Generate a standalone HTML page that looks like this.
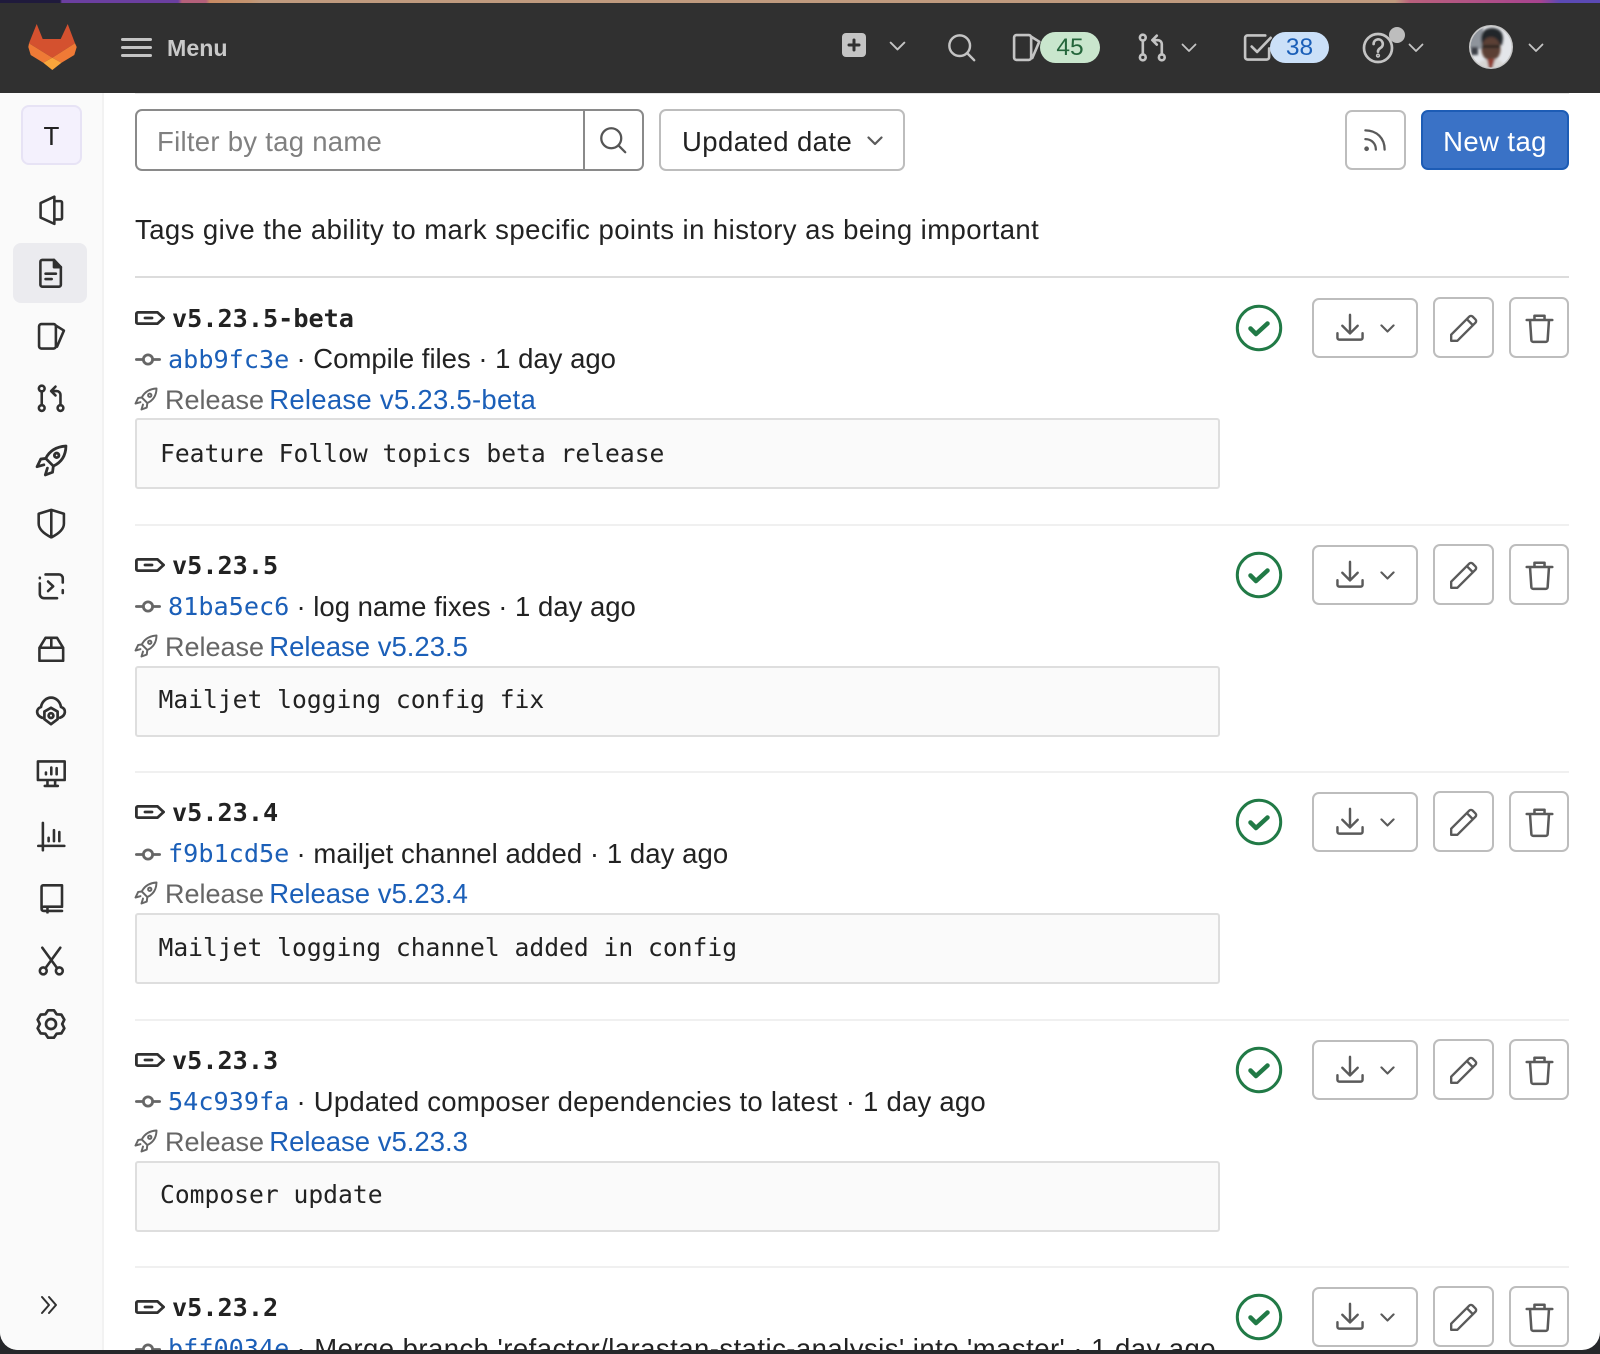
<!DOCTYPE html>
<html lang="en"><head><meta charset="utf-8"><title>Tags</title>
<style>
html,body{margin:0;padding:0;width:1600px;height:1354px;background:#26272a;overflow:hidden}
#win{position:absolute;left:0;top:0;width:1600px;height:1350px;background:#fff;overflow:hidden;border-radius:0 0 18px 18px;font-family:"Liberation Sans",sans-serif;color:#222}
.a{position:absolute}
svg.i{position:absolute;fill:none;stroke:#303030;stroke-width:1.35;stroke-linecap:round;stroke-linejoin:round;overflow:visible}
svg.h{stroke:#c4c4c4;stroke-width:1.35}
svg.g{stroke:#5a5a5a;stroke-width:1.3}
.t{position:absolute;white-space:nowrap;line-height:40px;font-size:27.5px;height:40px}
.m{font-family:"DejaVu Sans Mono","Liberation Mono",monospace;font-size:25.2px}
.b{font-weight:700}
.l{color:#1b5fb8;margin-left:-2.5px}
.gr{color:#666;font-size:27px}
.c{color:#1b5fb8}
.btn{position:absolute;background:#fff;border:2px solid #bdbdbd;border-radius:7px;box-sizing:border-box}
.row{position:absolute;left:0;width:1600px;height:247px}
.hr{position:absolute;left:135px;width:1434px;top:0;height:2px;background:#f0f0f0}
.box{position:absolute;left:135px;top:142px;width:1085px;height:71px;box-sizing:border-box;background:#fafafa;border:2px solid #dedede;border-radius:3px}
.badge{position:absolute;height:31px;line-height:31px;border-radius:16px;text-align:center;font-size:24.5px}
.bt{font-size:24.65px;top:156.500px}
</style></head><body>
<svg width="0" height="0" style="position:absolute">
<defs>
<symbol id="project" viewBox="0 0 16 16"><path d="M2.400 4.200L9.600.9v14.200l-7.200-3.300zM9.600 3.200h3.200a.8.8 0 0 1 .8.8v8a.8.8 0 0 1-.8.8H9.600"/></symbol>
<symbol id="doc" viewBox="0 0 16 16"><path d="M3.300 1H9.400L13 4.800V14a1 1 0 0 1-1 1H3.300a1 1 0 0 1-1-1V2a1 1 0 0 1 1-1z"/><path d="M9.400 1V4.800H13" fill="#303030"/><path d="M5 8.200H10.400M5 11H8.200"/></symbol>
<symbol id="issues" viewBox="0 0 16 16"><path d="M2.800 1.600h6.400a1.200 1.200 0 0 1 1.200 1.200v10.400a1.200 1.200 0 0 1-1.200 1.200H2.800a1.200 1.200 0 0 1-1.200-1.200V2.800a1.200 1.200 0 0 1 1.200-1.200zM10.400 2.400l4.200 2.600L11 13.400"/></symbol>
<symbol id="mr" viewBox="0 0 16 16"><circle cx="3" cy="2.900" r="1.500"/><circle cx="3" cy="13.100" r="1.500"/><circle cx="12.800" cy="13.100" r="1.500"/><path d="M3 4.400v7.200M12.800 11.600V6.200a2 2 0 0 0-2-2H8.400M10.200 1.900L7.900 4.200l2.300 2.300"/></symbol>
<symbol id="rocket" viewBox="0 0 16 16"><path d="M15 1C10.300 1.300 7.100 3.200 5.200 7l3.700 3.700C12.600 9 14.900 5.800 15 1z"/><circle cx="10.500" cy="5.500" r="1.100"/><path d="M5.200 7L2.800 7.300 1 11l3.300-.9M8.900 10.700l-.4 3L5 15l1-3.300"/></symbol>
<symbol id="shield" viewBox="0 0 16 16"><path d="M8 1L14.600 3v5.200C14.600 11 12 13.400 8 15.400 4 13.400 1.400 11 1.400 8.200V3zM8 1V15.400"/></symbol>
<symbol id="ci" viewBox="0 0 16 16"><path d="M5 1.800h7a2 2 0 0 1 2 2V6M2 6.500V12a2.200 2.200 0 0 0 2.200 2.200H11M2 3.800V3.500M14 10v1.500M6.300 5.500L9 8 6.300 10.500"/></symbol>
<symbol id="package" viewBox="0 0 16 16"><path d="M1.800 7.200L5 2h6l3.200 5.200V14H1.800zM1.800 7.200H14.200M8 2V7.200"/></symbol>
<symbol id="cloud" viewBox="0 0 16 16"><path d="M3.600 11.400C.4 10.200 .3 7 3 6 3.400 3.200 5.800 1.300 8 1.300c2.400 0 4.500 1.800 5 4.700 2.800 1 2.500 4.200-.5 5.400"/><path d="M8 6.400l3.300 1.900v3.800L8 14.600 4.700 12.100V8.300z"/><circle cx="8" cy="10.300" r="1.200"/></symbol>
<symbol id="monitor" viewBox="0 0 16 16"><path d="M1 1.800H15V11.500H1zM4.600 14.600H11.400M6 11.500v3M10 11.500v3M5.200 8.500V7.600M8 8.500V5M10.800 8.500V5.300"/></symbol>
<symbol id="chart" viewBox="0 0 16 16"><path d="M3.600 1V15.300M1.200 13H14.800M6.600 10.500V8.800M9.400 10.500V4.800M12.200 10.500V5.800"/></symbol>
<symbol id="book" viewBox="0 0 16 16"><path d="M2.900 13V2a.8.8 0 0 1 .8-.8H13.600V12.400H4.100a1.200 1.200 0 0 0-1.200 1.100c0 .7.500 1.100 1.200 1.100h9.500M6 12.400V15.400"/></symbol>
<symbol id="scissors" viewBox="0 0 16 16"><circle cx="3.800" cy="13" r="1.800"/><circle cx="12.200" cy="13" r="1.800"/><path d="M3.300 .9L11 11.500M12.700 .9L5 11.500"/></symbol>
<symbol id="gear" viewBox="0 0 16 16"><path d="M6.540 1.150H9.460L10.800 3.150 13.200 3.320 14.660 5.840 13.600 8 14.660 10.160 13.200 12.680 10.800 12.850 9.460 14.850H6.540L5.200 12.850 2.800 12.680 1.340 10.160 2.400 8 1.340 5.840 2.800 3.320 5.200 3.150z"/><circle cx="8" cy="8" r="2.500"/></symbol>
<symbol id="search" viewBox="0 0 16 16"><circle cx="7" cy="7" r="5.700"/><path d="M11.200 11.200L15 15"/></symbol>
<symbol id="chev" viewBox="0 0 16 10"><path d="M1.500 1.500L8 8l6.500-6.500"/></symbol>
<symbol id="todo" viewBox="0 0 16 16"><path d="M14 8.500V13a1.200 1.200 0 0 1-1.200 1.200H2.800A1.200 1.200 0 0 1 1.600 13V3A1.200 1.200 0 0 1 2.800 1.800H12M5 7.500l2.800 2.800L14.800 3"/></symbol>
<symbol id="help" viewBox="0 0 16 16"><circle cx="8" cy="8" r="7"/><path d="M5.800 6a2.300 2.300 0 1 1 3.400 2c-.8.500-1.200 1-1.200 1.800"/><circle cx="8" cy="11.800" r=".4"/></symbol>
<symbol id="rss" viewBox="0 0 16 16"><path d="M2.500 7.500c3.500 0 6 2.500 6 6M2.500 2.500c6.500 0 11 4.500 11 11"/><circle cx="3.200" cy="13" r=".7" fill="#555"/></symbol>
<symbol id="tag" viewBox="0 0 30 14"><path d="M2.800 1.400H22.500L28.600 7l-6.100 5.600H2.800A1.400 1.400 0 0 1 1.400 11.200V2.800A1.400 1.400 0 0 1 2.800 1.400z"/><path d="M10 7H17"/></symbol>
<symbol id="commit" viewBox="0 0 28 14"><circle cx="14" cy="7" r="5"/><path d="M1.500 7H9M19 7H26.500"/></symbol>
<symbol id="download" viewBox="0 0 16 16"><path d="M8 1V10.800M3.900 6.800L8 10.900l4.100-4.100M1.300 10.800v2.400a1 1 0 0 0 1 1H13.700a1 1 0 0 0 1-1v-2.400"/></symbol>
<symbol id="pencil" viewBox="0 0 16 16"><path d="M1.200 14.800V11.400L11.200 1.400a1.300 1.300 0 0 1 1.800 0l1.600 1.600a1.300 1.300 0 0 1 0 1.800L4.600 14.800zM9.800 2.800L13.200 6.200"/></symbol>
<symbol id="trash" viewBox="0 0 16 16"><path d="M1.400 3.600H14.600M5.400 3.600V1.400H10.600V3.600M3.100 3.600L3.800 14a1 1 0 0 0 1 .9h6.400a1 1 0 0 0 1-.9l.7-10.400"/></symbol>
<symbol id="ok" viewBox="0 0 48 48"><circle cx="24" cy="24" r="21.700" fill="none" stroke="#217a46" stroke-width="3"/><path d="M15.500 24.500l5.500 5.500 11.500-10.500" fill="none" stroke="#217a46" stroke-width="4.500" stroke-linecap="round" stroke-linejoin="round"/></symbol>
</defs></svg>

<div id="win">
<!-- sidebar -->
<div class="a" style="left:0;top:93px;width:102px;height:1257px;background:#fafafa;border-right:2px solid #f2f2f2"></div>
<div class="a" style="left:135px;top:93px;width:1434px;height:1px;background:#e4e4e4"></div>
<div class="a" style="left:21px;top:105px;width:61px;height:60px;box-sizing:border-box;background:#f4f1fd;border:2px solid #e7e3f5;border-radius:8px;text-align:center;line-height:58px;font-size:26px;color:#222">T</div>
<div class="a" style="left:13px;top:243px;width:74px;height:60px;background:#ebebef;border-radius:8px"></div>
<svg class="i" style="left:36px;top:195px" width="30.600" height="30.600"><use href="#project"/></svg>
<svg class="i" style="left:36px;top:258px" width="30.600" height="30.600"><use href="#doc"/></svg>
<svg class="i" style="left:36px;top:321px" width="30.600" height="30.600"><use href="#issues"/></svg>
<svg class="i" style="left:36px;top:383px" width="30.600" height="30.600"><use href="#mr"/></svg>
<svg class="i" style="left:35px;top:444px" width="33" height="33"><use href="#rocket"/></svg>
<svg class="i" style="left:36px;top:508px" width="30.600" height="30.600"><use href="#shield"/></svg>
<svg class="i" style="left:36px;top:571px" width="30.600" height="30.600"><use href="#ci"/></svg>
<svg class="i" style="left:36px;top:634px" width="30.600" height="30.600"><use href="#package"/></svg>
<svg class="i" style="left:35px;top:695px" width="32" height="32"><use href="#cloud"/></svg>
<svg class="i" style="left:36px;top:758px" width="30.600" height="30.600"><use href="#monitor"/></svg>
<svg class="i" style="left:36px;top:821px" width="30.600" height="30.600"><use href="#chart"/></svg>
<svg class="i" style="left:36px;top:883px" width="30.600" height="30.600"><use href="#book"/></svg>
<svg class="i" style="left:36px;top:946px" width="30.600" height="30.600"><use href="#scissors"/></svg>
<svg class="i" style="left:35px;top:1008px" width="32" height="32"><use href="#gear"/></svg>
<svg class="i" style="left:40px;top:1296px;stroke-width:2" width="18" height="18" viewBox="0 0 18 18"><path d="M2 1l7 8-7 8M9 1l7 8-7 8"/></svg>

<!-- header -->
<div class="a" style="left:0;top:0;width:1600px;height:93px;background:#303030"></div>
<div class="a" style="left:0;top:0;width:1600px;height:2.500px;background:linear-gradient(90deg,#1f1a3c 0,#1f1a3c 60px,#6b3fa0 62px,#6b3fa0 178px,#b4607a 182px,#b4607a 206px,#c98a63 210px,#c39470 250px,#bf9a7e 260px,#bf9a7e 1395px,#b9607c 1410px,#a8438f 1540px,#5b4ab5 1560px,#5b4ab5 1600px)"></div>
<svg class="a" style="left:0;top:0" width="100" height="93">
<path fill="#d4512f" d="M36.700 24L42.700 39H60.700L67.700 24 75 43.300 52.300 57.700 29 43.300z"/>
<path fill="#ef7a36" d="M29 43.300L52.300 57.700 43.300 62.700 30.700 55 28.300 47z"/>
<path fill="#ef7a36" d="M75 43.300L52.300 57.700 61.500 62.700 74.300 55 76.700 47z"/>
<path fill="#f9a63b" d="M52.300 57.700L61.500 62.700 52.300 70 43.300 62.700z"/>
</svg>
<div class="a" style="left:121px;top:38px;width:31px;height:3px;background:#c4c4c4;border-radius:2px"></div>
<div class="a" style="left:121px;top:46px;width:31px;height:3px;background:#c4c4c4;border-radius:2px"></div>
<div class="a" style="left:121px;top:54px;width:31px;height:3px;background:#c4c4c4;border-radius:2px"></div>
<div class="t b" style="left:167px;top:27.500px;font-size:23.200px;color:#c9c9c9">Menu</div>

<div class="a" style="left:842px;top:33px;width:24px;height:24px;background:#c4c4c4;border-radius:4px"></div>
<svg class="i" style="left:842px;top:33px;stroke:#303030;stroke-width:3" width="24" height="24" viewBox="0 0 24 24"><path d="M12 7v10M7 12h10"/></svg>
<svg class="i h" style="left:889px;top:41px;stroke-width:1.800" width="17" height="10.600"><use href="#chev"/></svg>
<svg class="i h" style="left:947px;top:33px" width="29" height="29"><use href="#search"/></svg>
<svg class="i h" style="left:1011px;top:32px" width="31" height="31"><use href="#issues"/></svg>
<div class="badge" style="left:1040px;top:32px;width:60px;background:#c9e6cd;color:#24663b">45</div>
<svg class="i h" style="left:1137px;top:32px" width="31" height="31"><use href="#mr"/></svg>
<svg class="i h" style="left:1181px;top:43px;stroke-width:1.800" width="16" height="10"><use href="#chev"/></svg>
<svg class="i h" style="left:1242px;top:32px" width="31" height="31"><use href="#todo"/></svg>
<div class="badge" style="left:1270px;top:32px;width:59px;background:#cbe0f8;color:#1b5fb8">38</div>
<svg class="i h" style="left:1362px;top:32px" width="32" height="32"><use href="#help"/></svg>
<div class="a" style="left:1389px;top:27px;width:16px;height:16px;border-radius:50%;background:#bdbdbd"></div>
<svg class="i h" style="left:1408px;top:43px;stroke-width:1.800" width="16" height="10"><use href="#chev"/></svg>
<svg class="a" style="left:1469px;top:25px" width="44" height="44" viewBox="0 0 44 44">
<defs><clipPath id="av"><circle cx="22" cy="22" r="20.500"/></clipPath><filter id="bl"><feGaussianBlur stdDeviation="1.400"/></filter></defs>
<circle cx="22" cy="22" r="22" fill="#c8c8c8"/>
<g clip-path="url(#av)"><rect width="44" height="44" fill="#e4e6ea"/>
<g filter="url(#bl)"><rect x="0" y="0" width="14" height="24" fill="#8f949c"/><path d="M12 14C12 6 17 3 23 3s11 3 11 11l-1 6H13z" fill="#23262c"/><ellipse cx="22" cy="24" rx="9.500" ry="12" fill="#5c4034"/><path d="M13 20h18v3H13z" fill="#2b2524"/><path d="M7 44c1-8 7-9 15-10s13 3 15 10z" fill="#d8d6d4"/><path d="M18 34h8l-3 10h-3z" fill="#8f3d30"/><rect x="2" y="22" width="7" height="8" fill="#3a3d44"/></g></g></svg>
<svg class="i h" style="left:1528px;top:43px;stroke-width:1.800" width="16" height="10"><use href="#chev"/></svg>

<!-- filter bar -->
<div class="btn" style="left:135px;top:109px;width:509px;height:62px;border-color:#8a8a8a;border-radius:7px"></div>
<div class="a" style="left:583px;top:110px;width:2px;height:60px;background:#8a8a8a"></div>
<div class="t" style="left:157px;top:122px;color:#808080;letter-spacing:.28px">Filter by tag name</div>
<svg class="i g" style="left:599px;top:126px;stroke:#555" width="28" height="28"><use href="#search"/></svg>
<div class="btn" style="left:659px;top:109px;width:246px;height:62px"></div>
<div class="t" style="left:682px;top:122px;letter-spacing:.42px">Updated date</div>
<svg class="i g" style="left:867px;top:136px;stroke-width:2.200" width="16" height="10"><use href="#chev"/></svg>
<div class="btn" style="left:1345px;top:110px;width:61px;height:60px"></div>
<svg class="i g" style="left:1361px;top:126px" width="28" height="28"><use href="#rss"/></svg>
<div class="a" style="left:1421px;top:110px;width:148px;height:60px;box-sizing:border-box;background:#3a72c6;border:2px solid #1d5cb5;border-radius:7px;text-align:center;line-height:59px;font-size:27.500px;letter-spacing:.4px;color:#fff">New tag</div>

<div class="t" style="left:135px;top:210px;letter-spacing:.44px;color:#222">Tags give the ability to mark specific points in history as being important</div>
<div class="a" style="left:135px;top:276px;width:1434px;height:2px;background:#dcdcdc"></div>

<!-- row 1 -->
<div class="row" style="top:277px">
<svg class="i" style="left:135px;top:34px;stroke-width:2.800" width="30" height="14"><use href="#tag"/></svg>
<div class="t m b" style="left:172px;top:22px">v5.23.5-beta</div>
<svg class="i" style="left:135px;top:76px;stroke:#666;stroke-width:3" width="26" height="13"><use href="#commit"/></svg>
<div class="t m c" style="left:168px;top:63px">abb9fc3e</div>
<div class="t" style="left:296.500px;top:62px">· Compile files · 1 day ago</div>
<svg class="i" style="left:134px;top:110px;stroke:#666;stroke-width:1.300" width="24" height="24"><use href="#rocket"/></svg>
<div class="t" style="left:165px;top:102.500px"><span class="gr">Release</span> <span class="l" style="letter-spacing:.27px">Release v5.23.5-beta</span></div>
<div class="box" style="top:141px"></div><div class="t m bt" style="left:160px">Feature Follow topics beta release</div>
<svg class="a" style="left:1235px;top:27px" width="48" height="48"><use href="#ok"/></svg>
<div class="btn" style="left:1312px;top:21px;width:106px;height:60px"></div>
<svg class="i g" style="left:1335px;top:36px" width="30" height="30"><use href="#download"/></svg>
<svg class="i g" style="left:1380px;top:47px;stroke-width:2.200" width="15" height="9.400"><use href="#chev"/></svg>
<div class="btn" style="left:1433px;top:20px;width:61px;height:61px"></div>
<svg class="i g" style="left:1449px;top:37px" width="29" height="29"><use href="#pencil"/></svg>
<div class="btn" style="left:1509px;top:20px;width:60px;height:61px"></div>
<svg class="i g" style="left:1524px;top:36px" width="31" height="31"><use href="#trash"/></svg>
</div>

<!-- row 2 -->
<div class="row" style="top:523.500px"><div class="hr"></div>
<svg class="i" style="left:135px;top:34px;stroke-width:2.800" width="30" height="14"><use href="#tag"/></svg>
<div class="t m b" style="left:172px;top:22px">v5.23.5</div>
<svg class="i" style="left:135px;top:76.500px;stroke:#666;stroke-width:3" width="26" height="13"><use href="#commit"/></svg>
<div class="t m c" style="left:168px;top:63px">81ba5ec6</div>
<div class="t" style="left:296.500px;top:63px">· log name fixes · 1 day ago</div>
<svg class="i" style="left:134px;top:110px;stroke:#666;stroke-width:1.300" width="24" height="24"><use href="#rocket"/></svg>
<div class="t" style="left:165px;top:103px"><span class="gr">Release</span> <span class="l">Release v5.23.5</span></div>
<div class="box"></div><div class="t m bt" style="left:158.500px">Mailjet logging config fix</div>
<svg class="a" style="left:1235px;top:27px" width="48" height="48"><use href="#ok"/></svg>
<div class="btn" style="left:1312px;top:21px;width:106px;height:60px"></div>
<svg class="i g" style="left:1335px;top:36px" width="30" height="30"><use href="#download"/></svg>
<svg class="i g" style="left:1380px;top:47px;stroke-width:2.200" width="15" height="9.400"><use href="#chev"/></svg>
<div class="btn" style="left:1433px;top:20px;width:61px;height:61px"></div>
<svg class="i g" style="left:1449px;top:37px" width="29" height="29"><use href="#pencil"/></svg>
<div class="btn" style="left:1509px;top:20px;width:60px;height:61px"></div>
<svg class="i g" style="left:1524px;top:36px" width="31" height="31"><use href="#trash"/></svg>
</div>

<!-- row 3 -->
<div class="row" style="top:771px"><div class="hr"></div>
<svg class="i" style="left:135px;top:34px;stroke-width:2.800" width="30" height="14"><use href="#tag"/></svg>
<div class="t m b" style="left:172px;top:22px">v5.23.4</div>
<svg class="i" style="left:135px;top:76.500px;stroke:#666;stroke-width:3" width="26" height="13"><use href="#commit"/></svg>
<div class="t m c" style="left:168px;top:63px">f9b1cd5e</div>
<div class="t" style="left:296.500px;top:62.500px;letter-spacing:.06px">· mailjet channel added · 1 day ago</div>
<svg class="i" style="left:134px;top:110px;stroke:#666;stroke-width:1.300" width="24" height="24"><use href="#rocket"/></svg>
<div class="t" style="left:165px;top:103px"><span class="gr">Release</span> <span class="l">Release v5.23.4</span></div>
<div class="box"></div><div class="t m bt" style="left:158.500px">Mailjet logging channel added in config</div>
<svg class="a" style="left:1235px;top:27px" width="48" height="48"><use href="#ok"/></svg>
<div class="btn" style="left:1312px;top:21px;width:106px;height:60px"></div>
<svg class="i g" style="left:1335px;top:36px" width="30" height="30"><use href="#download"/></svg>
<svg class="i g" style="left:1380px;top:47px;stroke-width:2.200" width="15" height="9.400"><use href="#chev"/></svg>
<div class="btn" style="left:1433px;top:20px;width:61px;height:61px"></div>
<svg class="i g" style="left:1449px;top:37px" width="29" height="29"><use href="#pencil"/></svg>
<div class="btn" style="left:1509px;top:20px;width:60px;height:61px"></div>
<svg class="i g" style="left:1524px;top:36px" width="31" height="31"><use href="#trash"/></svg>
</div>

<!-- row 4 -->
<div class="row" style="top:1018.500px"><div class="hr"></div>
<svg class="i" style="left:135px;top:34px;stroke-width:2.800" width="30" height="14"><use href="#tag"/></svg>
<div class="t m b" style="left:172px;top:22px">v5.23.3</div>
<svg class="i" style="left:135px;top:76.500px;stroke:#666;stroke-width:3" width="26" height="13"><use href="#commit"/></svg>
<div class="t m c" style="left:168px;top:63px">54c939fa</div>
<div class="t" style="left:296.500px;top:63px;letter-spacing:.23px">· Updated composer dependencies to latest · 1 day ago</div>
<svg class="i" style="left:134px;top:110px;stroke:#666;stroke-width:1.300" width="24" height="24"><use href="#rocket"/></svg>
<div class="t" style="left:165px;top:103px"><span class="gr">Release</span> <span class="l">Release v5.23.3</span></div>
<div class="box"></div><div class="t m bt" style="left:160px">Composer update</div>
<svg class="a" style="left:1235px;top:27px" width="48" height="48"><use href="#ok"/></svg>
<div class="btn" style="left:1312px;top:21px;width:106px;height:60px"></div>
<svg class="i g" style="left:1335px;top:36px" width="30" height="30"><use href="#download"/></svg>
<svg class="i g" style="left:1380px;top:47px;stroke-width:2.200" width="15" height="9.400"><use href="#chev"/></svg>
<div class="btn" style="left:1433px;top:20px;width:61px;height:61px"></div>
<svg class="i g" style="left:1449px;top:37px" width="29" height="29"><use href="#pencil"/></svg>
<div class="btn" style="left:1509px;top:20px;width:60px;height:61px"></div>
<svg class="i g" style="left:1524px;top:36px" width="31" height="31"><use href="#trash"/></svg>
</div>

<!-- row 5 -->
<div class="row" style="top:1266px;height:84px;overflow:hidden"><div class="hr"></div>
<svg class="i" style="left:135px;top:34px;stroke-width:2.800" width="30" height="14"><use href="#tag"/></svg>
<div class="t m b" style="left:172px;top:22px">v5.23.2</div>
<svg class="i" style="left:135px;top:76.500px;stroke:#666;stroke-width:3" width="26" height="13"><use href="#commit"/></svg>
<div class="t m c" style="left:168px;top:63px">bff0034e</div>
<div class="t" style="left:296.500px;top:63px;letter-spacing:.46px">· Merge branch 'refactor/larastan-static-analysis' into 'master' · 1 day ago</div>
<svg class="a" style="left:1235px;top:27px" width="48" height="48"><use href="#ok"/></svg>
<div class="btn" style="left:1312px;top:21px;width:106px;height:60px"></div>
<svg class="i g" style="left:1335px;top:36px" width="30" height="30"><use href="#download"/></svg>
<svg class="i g" style="left:1380px;top:47px;stroke-width:2.200" width="15" height="9.400"><use href="#chev"/></svg>
<div class="btn" style="left:1433px;top:20px;width:61px;height:61px"></div>
<svg class="i g" style="left:1449px;top:37px" width="29" height="29"><use href="#pencil"/></svg>
<div class="btn" style="left:1509px;top:20px;width:60px;height:61px"></div>
<svg class="i g" style="left:1524px;top:36px" width="31" height="31"><use href="#trash"/></svg>
</div>
</div>
</body></html>
